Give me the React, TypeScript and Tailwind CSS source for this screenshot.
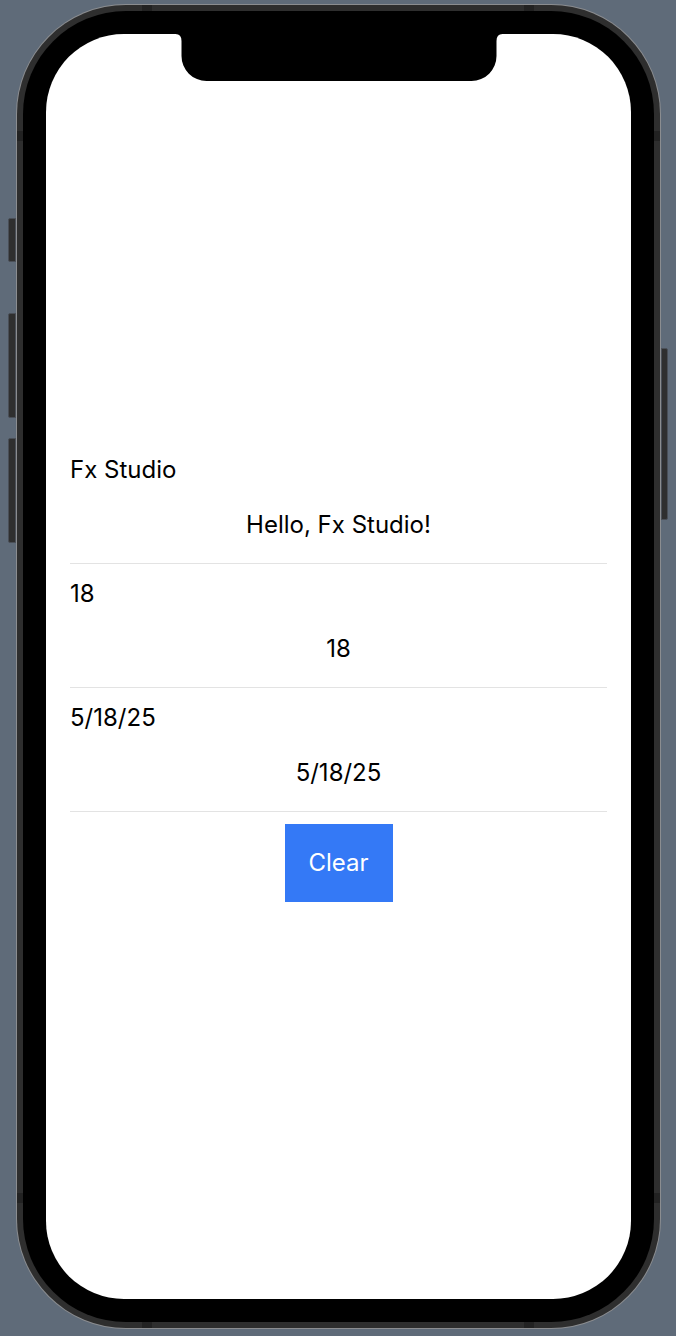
import React from "react";

const rows = [
  { label: "Fx Studio", value: "Hello, Fx Studio!" },
  { label: "18", value: "18" },
  { label: "5/18/25", value: "5/18/25" },
];

function Notch() {
  return (
    <svg
      className="absolute left-1/2 top-0 -translate-x-1/2"
      width="327"
      height="48"
      viewBox="0 0 327 48"
    >
      <path
        d="M0 0 Q6 0 6 7 V22 A25 25 0 0 0 31 47 H296 A25 25 0 0 0 321 22 V7 Q321 0 327 0 Z"
        fill="#000"
      />
    </svg>
  );
}

export default function App() {
  return (
    <div
      className="w-[676px] h-[1336px] bg-[#5f6b79] pl-[16px] pt-[4px] overflow-hidden"
      style={{ fontFamily: "Inter, 'Noto Sans', sans-serif" }}
    >
      <div className="relative w-[645px] h-[1325px]">
        {/* side buttons */}
        <div className="absolute left-[-8px] top-[214px] w-[8px] h-[44px] rounded-l-[2px] bg-[#2f2f2f] border border-[#4a4f57]" />
        <div className="absolute left-[-8px] top-[309px] w-[8px] h-[105px] rounded-l-[2px] bg-[#2f2f2f] border border-[#4a4f57]" />
        <div className="absolute left-[-8px] top-[434px] w-[8px] h-[105px] rounded-l-[2px] bg-[#2f2f2f] border border-[#4a4f57]" />
        <div className="absolute left-[645px] top-[344px] w-[7px] h-[172px] rounded-r-[2px] bg-[#2f2f2f] border border-[#4a4f57]" />

        <div className="w-full h-full rounded-[110px] bg-[#8b8d90] p-[1px]">
          <div className="relative w-full h-full rounded-[109px] bg-[#2e2e2e] p-[6px]">
            {/* antenna bands */}
            <div className="absolute left-[125px] top-0 w-[10px] h-[6px] bg-[#222]" />
            <div className="absolute left-[507px] top-0 w-[10px] h-[6px] bg-[#222]" />
            <div className="absolute left-[125px] bottom-0 w-[10px] h-[6px] bg-[#222]" />
            <div className="absolute left-[507px] bottom-0 w-[10px] h-[6px] bg-[#222]" />
            <div className="absolute left-0 top-[126px] w-[6px] h-[10px] bg-[#222]" />
            <div className="absolute right-0 top-[126px] w-[6px] h-[10px] bg-[#222]" />
            <div className="absolute left-0 top-[1188px] w-[6px] h-[10px] bg-[#222]" />
            <div className="absolute right-0 top-[1188px] w-[6px] h-[10px] bg-[#222]" />

            <div className="w-full h-full rounded-[103px] bg-black p-[23px]">
              <div className="relative w-full h-full rounded-[78px] bg-white overflow-hidden flex flex-col justify-center pt-[9px]">
                <Notch />
                <div className="px-[24px] flex flex-col">
                  {rows.map((r, i) => (
                    <div
                      key={i}
                      className="flex flex-col pt-[15px] pb-[23px] border-b border-[#e3e3e3]"
                    >
                      <div className="h-[30px] leading-[30px] text-[24px] text-black">
                        {r.label}
                      </div>
                      <div className="mt-[25px] h-[30px] leading-[30px] text-[24px] text-black text-center">
                        {r.value}
                      </div>
                    </div>
                  ))}
                  <div className="flex justify-center mt-[12px]">
                    <button className="w-[108px] h-[78px] bg-[#3479f6] text-white text-[24px] leading-[30px]">
                      Clear
                    </button>
                  </div>
                </div>
              </div>
            </div>
          </div>
        </div>
      </div>
    </div>
  );
}
